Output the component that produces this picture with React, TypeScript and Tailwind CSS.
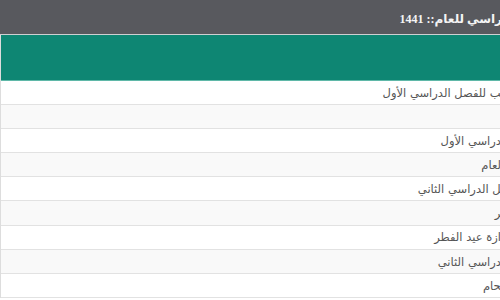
import React from "react";

const rows: { t: string; bg: string }[] = [
  { t: "\u200dب للفصل الدراسي الأول", bg: "bg-white" },
  { t: "", bg: "bg-[#f9f9f9]" },
  { t: "دراسي الأول", bg: "bg-white" },
  { t: "لعام", bg: "bg-[#f9f9f9]" },
  { t: "\u200dل الدراسي الثاني", bg: "bg-white" },
  { t: "\u200dر", bg: "bg-[#f9f9f9]" },
  { t: "ازة عيد الفطر", bg: "bg-white" },
  { t: "دراسي الثاني", bg: "bg-[#f9f9f9]" },
  { t: "\u200dحام", bg: "bg-white" },
];

export default function App() {
  return (
    <div
      className="w-[500px] h-[300px] overflow-hidden bg-white"
      style={{ fontFamily: "Tahoma, 'DejaVu Sans', sans-serif" }}
    >
      <div className="h-[34px] bg-[#58595e] flex items-center justify-end overflow-hidden pt-[3px]">
        <span
          dir="rtl"
          className="whitespace-nowrap text-[#f4f4f4] font-bold text-[12px] -mr-[2px]"
          style={{ fontFamily: "'Liberation Serif', 'DejaVu Sans', serif" }}
        >
          راسي للعام:: 1441
        </span>
      </div>
      <div className="h-px bg-[#cfd0d2]" />
      <div className="border-l border-[#dddddd]">
        <div className="h-[46px] bg-[#0e8673] border-b border-[#5fb8a8]" />
        {rows.map((r, i) => (
          <div
            key={i}
            className={`h-[24.1px] ${r.bg} border-b border-[#e2e2e2] flex items-center justify-end overflow-hidden pt-[2px]`}
          >
            <span dir="rtl" className="whitespace-nowrap text-[#555555] text-[11.5px] -mr-[1px]">
              {r.t}
            </span>
          </div>
        ))}
      </div>
    </div>
  );
}
